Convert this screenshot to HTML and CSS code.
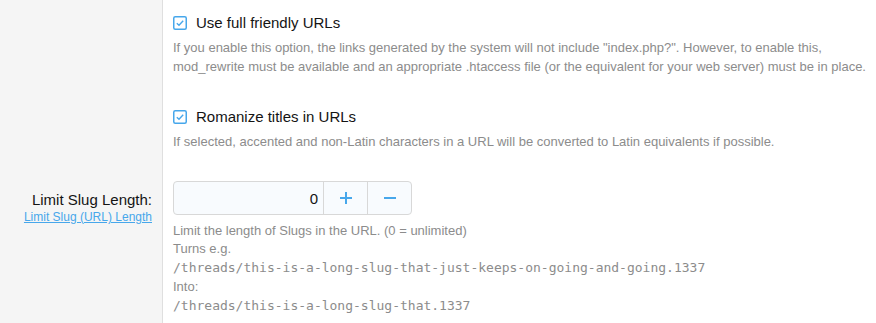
FILE: index.html
```html
<!DOCTYPE html>
<html lang="en">
<head>
    <meta charset="UTF-8">
    <title>Options</title>
    <link rel="stylesheet" href="styles.css">
</head>
<body>
    <div class="form">
        <div class="row">
            <div class="row-label"></div>
            <div class="row-input">
                <ul class="check-list">
                    <li>
                        <label class="check">
                            <svg class="check-box" width="14" height="14" viewBox="0 0 14 14"><rect x="0.75" y="0.75" width="12.5" height="12.5" rx="1.5" fill="#fff" stroke="#47a7eb" stroke-width="1.5"/><path d="M3.8 7.2 L6 9.2 L10.2 4.8" fill="none" stroke="#47a7eb" stroke-width="1.4"/></svg>
                            <span>Use full friendly URLs</span>
                        </label>
                        <div class="hint">If you enable this option, the links generated by the system will not include "index.php?". However, to enable this, mod_rewrite must be available and an appropriate .htaccess file (or the equivalent for your web server) must be in place.</div>
                    </li>
                    <li>
                        <label class="check">
                            <svg class="check-box" width="14" height="14" viewBox="0 0 14 14"><rect x="0.75" y="0.75" width="12.5" height="12.5" rx="1.5" fill="#fff" stroke="#47a7eb" stroke-width="1.5"/><path d="M3.8 7.2 L6 9.2 L10.2 4.8" fill="none" stroke="#47a7eb" stroke-width="1.4"/></svg>
                            <span>Romanize titles in URLs</span>
                        </label>
                        <div class="hint">If selected, accented and non-Latin characters in a URL will be converted to Latin equivalents if possible.</div>
                    </li>
                </ul>
            </div>
        </div>

        <div class="row">
            <div class="row-label">
                <div class="label-title">Limit Slug Length:</div>
                <a class="label-link" href="#">Limit Slug (URL) Length</a>
            </div>
            <div class="row-input">
                <div class="spinner">
                    <input class="spinner-field" type="text" value="0">
                    <button class="spinner-btn">
                        <svg width="14" height="14" viewBox="0 0 14 14"><path d="M7 1 V13 M1 7 H13" stroke="#47a7eb" stroke-width="2"/></svg>
                    </button>
                    <button class="spinner-btn">
                        <svg width="14" height="14" viewBox="0 0 14 14"><path d="M1 7 H13" stroke="#47a7eb" stroke-width="2"/></svg>
                    </button>
                </div>
                <div class="hint explain">
                    Limit the length of Slugs in the URL. (0 = unlimited)<br>
                    Turns e.g.<br>
                    <code>/threads/this-is-a-long-slug-that-just-keeps-on-going-and-going.1337</code><br>
                    Into:<br>
                    <code>/threads/this-is-a-long-slug-that.1337</code>
                </div>
            </div>
        </div>
    </div>
</body>
</html>
```

FILE: styles.css
```css
body {
    margin: 0;
    font-family: "Liberation Sans", Arial, sans-serif;
    color: #141414;
    background: #fff;
}
.form {
    min-height: 323px;
    background: linear-gradient(to right, #f5f5f5 0, #f5f5f5 162px, #dfdfdf 162px, #dfdfdf 163px, #fff 163px);
}
.row {
    display: grid;
    grid-template-columns: 163px 1fr;
}
.row-label {
    padding: 0 11px 0 10px;
    text-align: right;
}
.row-input {
    padding: 0 10px;
}
.check-list {
    list-style: none;
    margin: 0;
    padding: 13px 0 0;
}
.check-list li {
    margin-bottom: 31px;
}
.check-list li:last-child {
    margin-bottom: 30px;
}
.check {
    display: flex;
    align-items: center;
    gap: 9px;
    font-size: 15px;
    line-height: 20px;
}
.check-box {
    flex: none;
}
.hint {
    margin-top: 5px;
    font-size: 13px;
    line-height: 19px;
    color: #8c8c8c;
}
.label-title {
    font-size: 15px;
    line-height: 20px;
    margin-top: 9px;
}
.label-link {
    display: block;
    font-size: 12px;
    line-height: 15px;
    color: #47a7eb;
}
.spinner {
    display: flex;
    width: 239px;
    height: 34px;
    border: 1px solid #d8d8d8;
    border-radius: 4px;
    background: #f8fbfe;
    box-sizing: border-box;
}
.spinner-field {
    width: 149px;
    border: none;
    background: transparent;
    text-align: right;
    font-family: inherit;
    font-size: 15px;
    color: #141414;
    padding: 0 5px 0 0;
    box-sizing: border-box;
}
.spinner-btn {
    flex: 1;
    border: none;
    border-left: 1px solid #d8d8d8;
    background: transparent;
    display: flex;
    align-items: center;
    justify-content: center;
    padding: 0;
}
.explain {
    margin-top: 7px;
    line-height: 18px;
}
.explain code {
    font-family: "DejaVu Sans Mono", monospace;
    font-size: 13px;
    line-height: 20px;
}
```
